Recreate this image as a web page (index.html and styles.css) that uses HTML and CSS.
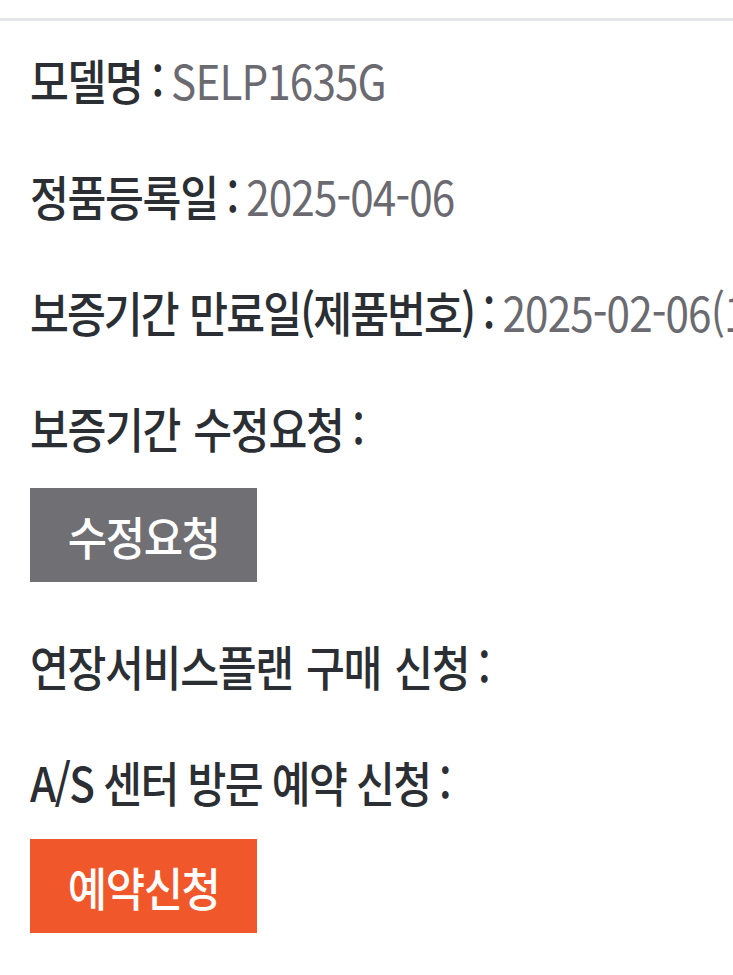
FILE: index.html
```html
<!DOCTYPE html>
<html lang="ko">
<head>
<meta charset="utf-8">
<link rel="stylesheet" href="styles.css">
</head>
<body>
<div class="page">
  <div class="rule"></div>
  <div class="info">
    <p class="row"><span class="label">모델명</span><span class="colon">:</span><span class="value">SELP1635G</span></p>
    <p class="row"><span class="label">정품등록일</span><span class="colon">:</span><span class="value">2025-04-06</span></p>
    <p class="row"><span class="label label-paren">보증기간 만료일(제품번호)</span><span class="colon">:</span><span class="value">2025-02-06(1</span></p>
    <p class="row"><span class="label">보증기간 수정요청</span><span class="colon">:</span></p>
    <a class="btn btn-gray"><span class="btn-text">수정요청</span></a>
    <p class="row"><span class="label">연장서비스플랜 구매 신청</span><span class="colon">:</span></p>
    <p class="row"><span class="label label-tight">A/S 센터 방문 예약 신청</span><span class="colon">:</span></p>
    <a class="btn btn-orange"><span class="btn-text">예약신청</span></a>
  </div>
</div>
</body>
</html>
```
FILE: styles.css
```css
html, body {
  margin: 0;
  padding: 0;
  background: #ffffff;
}
.page {
  width: 733px;
  height: 975px;
  overflow: hidden;
  font-family: "Noto Sans CJK KR", "Noto Sans", sans-serif;
}
.rule {
  margin-top: 18px;
  height: 3px;
  background: #e4e5e8;
}
.info {
  padding: 0 0 0 30px;
  display: flex;
  flex-direction: column;
  align-items: flex-start;
}
.row {
  margin: 0;
  height: 116px;
  display: flex;
  align-items: center;
  white-space: nowrap;
  font-size: 48px;
  transform: scaleX(0.88);
  transform-origin: left center;
}
.label {
  color: #2b2f34;
  font-weight: 500;
  letter-spacing: -1.5px;
  word-spacing: 3px;
}
.label-paren {
  letter-spacing: -2.2px;
  word-spacing: 2px;
}
.label-tight {
  letter-spacing: -2px;
  word-spacing: 0;
}
.colon {
  color: #2b2f34;
  font-weight: 500;
  margin: 0 8px 0 10px;
}
.value {
  color: #6a6a70;
  font-weight: 400;
  letter-spacing: -1px;
}
.btn {
  display: flex;
  align-items: center;
  justify-content: center;
  width: 227px;
  height: 94px;
  color: #ffffff;
}
.btn-text {
  font-size: 46px;
  font-weight: 500;
  letter-spacing: -1.5px;
  transform: scaleX(0.93);
}
.btn-gray {
  background: #6f6f74;
  margin: 3px 0 25px;
}
.btn-orange {
  background: #f0572a;
}
```
